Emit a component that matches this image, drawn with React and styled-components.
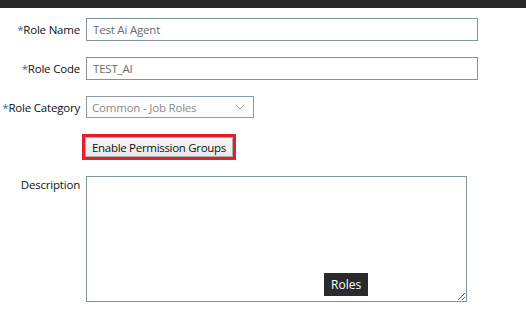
import React from "react";
import styled, { createGlobalStyle } from "styled-components";

const GlobalStyle = createGlobalStyle`
  body {
    margin: 0;
    background: #ffffff;
    font-family: "Open Sans", "Noto Sans", sans-serif;
  }
`;

const App = () => {
  return (
    <S.Page>
      <GlobalStyle />
      <S.TopBar />
      <S.Form>
        <S.Label>
          <S.Star>*</S.Star>Role Name
        </S.Label>
        <S.Input defaultValue="Test Ai Agent" />

        <S.Label>
          <S.Star>*</S.Star>Role Code
        </S.Label>
        <S.Input defaultValue="TEST_AI" />

        <S.Label>
          <S.Star>*</S.Star>Role Category
        </S.Label>
        <S.Select>
          <span>Common - Job Roles</span>
          <svg width="10" height="6" viewBox="0 0 10 6">
            <path d="M1 1 L5 5 L9 1" fill="none" stroke="#a9b2ba" strokeWidth="1" />
          </svg>
        </S.Select>

        <span />
        <S.Highlight>
          <S.Button>Enable Permission Groups</S.Button>
        </S.Highlight>

        <S.Label $top>Description</S.Label>
        <S.AreaWrap>
          <S.TextArea />
          <S.Tooltip>Roles</S.Tooltip>
        </S.AreaWrap>
      </S.Form>
    </S.Page>
  );
};

export default App;

const Page = styled.div`
  width: 526px;
  height: 326px;
  overflow: hidden;
`;
const TopBar = styled.div`
  height: 8px;
  background: #262626;
`;
const Form = styled.div`
  display: grid;
  grid-template-columns: 80px 1fr;
  column-gap: 6px;
  row-gap: 16px;
  align-items: center;
  padding-top: 10px;
`;
const Label = styled.label`
  font-size: 11.5px;
  color: #111111;
  text-align: right;
  white-space: nowrap;
  letter-spacing: -0.2px;
  align-self: ${(p) => (p.$top ? "start" : "center")};
  padding-top: ${(p) => (p.$top ? "1px" : "0")};
`;
const Star = styled.span`
  color: #1a73b8;
`;
const Input = styled.input`
  box-sizing: border-box;
  width: 392px;
  height: 23px;
  border: 1px solid #84949f;
  padding: 0 6px;
  font-family: inherit;
  font-size: 11.5px;
  letter-spacing: -0.2px;
  color: #6b6b6b;
  outline: none;
`;
const Select = styled.div`
  box-sizing: border-box;
  width: 168px;
  height: 22px;
  border: 1px solid #8e9ba5;
  background: #fdfdfd;
  display: flex;
  align-items: center;
  justify-content: space-between;
  padding: 0 8px 0 5px;
  font-size: 11.5px;
  letter-spacing: -0.2px;
  color: #8a8a8a;
`;
const Highlight = styled.div`
  justify-self: start;
  margin-left: -4px;
  border: 3px solid #e3202a;
  display: flex;
`;
const Button = styled.button`
  box-sizing: border-box;
  height: 20px;
  padding: 0 6px;
  border: 1px solid #a8aeb3;
  background: linear-gradient(#f7f7f7, #e9e9e9);
  font-family: inherit;
  font-size: 11.5px;
  letter-spacing: -0.3px;
  color: #111111;
`;
const AreaWrap = styled.div`
  position: relative;
  width: 381px;
  height: 126px;
`;
const TextArea = styled.textarea`
  box-sizing: border-box;
  width: 100%;
  height: 100%;
  border: 1px solid #84949f;
  margin: 0;
  display: block;
  outline: none;
`;
const Tooltip = styled.div`
  position: absolute;
  left: 238px;
  top: 97px;
  height: 23px;
  padding: 0 7px;
  display: flex;
  align-items: center;
  background: #2b2b2b;
  color: #ffffff;
  font-size: 12px;
`;

const S = {
  Page,
  TopBar,
  Form,
  Label,
  Star,
  Input,
  Select,
  Highlight,
  Button,
  AreaWrap,
  TextArea,
  Tooltip,
};
